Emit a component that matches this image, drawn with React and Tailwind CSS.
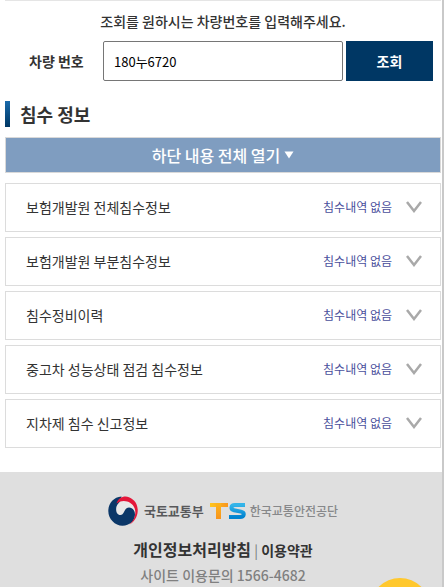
import {useState} from "react";

const items = [
  {title: "보험개발원 전체침수정보", status: "침수내역 없음"},
  {title: "보험개발원 부분침수정보", status: "침수내역 없음"},
  {title: "침수정비이력", status: "침수내역 없음"},
  {title: "중고차 성능상태 점검 침수정보", status: "침수내역 없음"},
  {title: "지차제 침수 신고정보", status: "침수내역 없음"},
];

function Chevron(){
  return(
    <svg className="w-4 h-3" viewBox="0 0 16 12" fill="none" aria-hidden="true">
      <path d="M1 1 L8 10 L15 1" stroke="#a9a9a9" strokeWidth="2.5"/>
    </svg>
  )
}

// ministry emblem
function Emblem(){
  return(
    <svg className="w-[30px] h-[30px]" viewBox="0 0 30 30" aria-hidden="true">
      <circle cx="15" cy="15" r="13" fill="#e9e9e9"/>
      <path d="M13.5 0.4 C5.5 1 0.3 7.5 0.3 15 C0.3 23 7 29.7 14.500 29.700 C21.500 29.700 27 25 27 18.500 C27 14.500 24.500 11.500 21 11.500 C16 11.500 16.500 19 12.500 19 C8.500 19 7.500 14 8.500 10.500 C9.500 8 11 7 12.500 5 Z" fill="#0b3768"/>
      <path d="M8.500 7.500 C10 2 16 -0.800 21 1.200 C27 3.500 30 9 29.700 15 C29.500 21 26 26 21.500 28.500 C27 23.500 28.500 17 26.500 12 C24 5.500 15 2.500 8.500 7.500 Z" fill="#e4173a"/>
    </svg>
  )
}

function TsLogo(){
  return(
    <svg className="w-9 h-4" viewBox="0 0 36 16" aria-hidden="true">
      <defs>
        <linearGradient id="tsOrange" x1="0" y1="0" x2="1" y2="0">
          <stop offset="0" stopColor="#ffc61e"/>
          <stop offset="1" stopColor="#f9961d"/>
        </linearGradient>
        <linearGradient id="tsStem" x1="0" y1="0" x2="0" y2="1">
          <stop offset="0" stopColor="#fdb51c"/>
          <stop offset="1" stopColor="#f7941d"/>
        </linearGradient>
        <linearGradient id="tsBlue" x1="0" y1="0" x2="0" y2="1">
          <stop offset="0" stopColor="#35b5e9"/>
          <stop offset="1" stopColor="#0083d0"/>
        </linearGradient>
      </defs>
      <rect x="0" y="0" width="18" height="4" fill="url(#tsOrange)"/>
      <rect x="6" y="0" width="5" height="16" fill="url(#tsStem)"/>
      <path d="M35 2 H25 C20.500 2 20.500 6.500 24 7.200 L31 8.600 C35 9.500 34.500 14 30 14 H19" fill="none" stroke="url(#tsBlue)" strokeWidth="4"/>
    </svg>
  )
}

export default function App(){
  const [carNumber, setCarNumber] = useState("180누6720");

  return(
    <div className="min-h-screen flex flex-col bg-white border-r-2 border-[#c9c9c9] text-[#333333] text-sm font-['Noto_Sans_CJK_KR','Noto_Sans',sans-serif]">
      <main className="pl-[5px] pr-px pb-6">
        <div className="border-t border-[#e5e5e5] pt-2.5">
          <p className="text-center font-medium leading-5">조회를 원하시는 차량번호를 입력해주세요.</p>
          <form className="flex items-center mt-2.5 pl-6 pr-2" onSubmit={(ev)=>ev.preventDefault()}>
            <label htmlFor="carNumber" className="w-[74px] shrink-0 font-bold">차량 번호</label>
            <input id="carNumber" type="text" value={carNumber} onChange={(ev)=>setCarNumber(ev.target.value)} className="flex-1 min-w-0 h-10 px-2.5 border border-[#767676] rounded-xs text-[13px] text-black"/>
            <button type="submit" className="w-[87px] h-10 ml-[3px] bg-[#003764] text-white font-bold">조회</button>
          </form>
        </div>

        <h2 className="flex items-center mt-5 h-[26px] text-lg font-bold">
          <span className="w-[5px] h-full mr-2.5 bg-linear-to-b from-[#1a6aab] to-[#003764]"></span>
          침수 정보
        </h2>

        <button type="button" className="flex items-center justify-center gap-1 w-full h-9 mt-2.5 border border-[#d9d9d9] bg-[#7f9dc0] text-base font-medium text-white">
          하단 내용 전체 열기
          <svg className="w-2.5 h-2" viewBox="0 0 10 8" aria-hidden="true">
            <path d="M0.500 0.500 H9.500 L5 7.500 Z" fill="white"/>
          </svg>
        </button>

        <ul className="flex flex-col gap-[5px] mt-2.5">
          {items.map((item)=>(
            <li key={item.title}>
              <button type="button" className="flex items-center w-full h-[49px] pl-5 pr-[18px] pb-0.5 border border-[#dcdcdc] text-left">
                <span className="flex-1">{item.title}</span>
                <span className="mr-3.5 text-xs text-[#4a4f9c]">{item.status}</span>
                <Chevron/>
              </button>
            </li>
          ))}
        </ul>
      </main>

      <footer className="flex-1 pt-6 pl-1 bg-[#dfdfdf] text-center">
        <div className="flex items-center justify-center h-[30px]">
          <Emblem/>
          <span className="ml-1.5 text-[13px] font-bold text-[#58595b]">국토교통부</span>
          <span className="ml-1.5"><TsLogo/></span>
          <span className="ml-1 text-xs font-medium text-[#87888a]">한국교통안전공단</span>
        </div>
        <p className="mt-[11px] leading-6">
          <a href="#privacy" className="text-base font-bold">개인정보처리방침</a>
          <span className="text-[#777777]"> | </span>
          <a href="#terms" className="font-bold">이용약관</a>
        </p>
        <p className="mt-[3px] leading-5 font-medium text-[#808080]">사이트 이용문의 1566-4682</p>
      </footer>

      <button type="button" aria-label="상담" className="fixed right-[14px] -bottom-[51px] size-[60px] rounded-full bg-[#ffc82e] shadow-lg"></button>
    </div>
  )
}
